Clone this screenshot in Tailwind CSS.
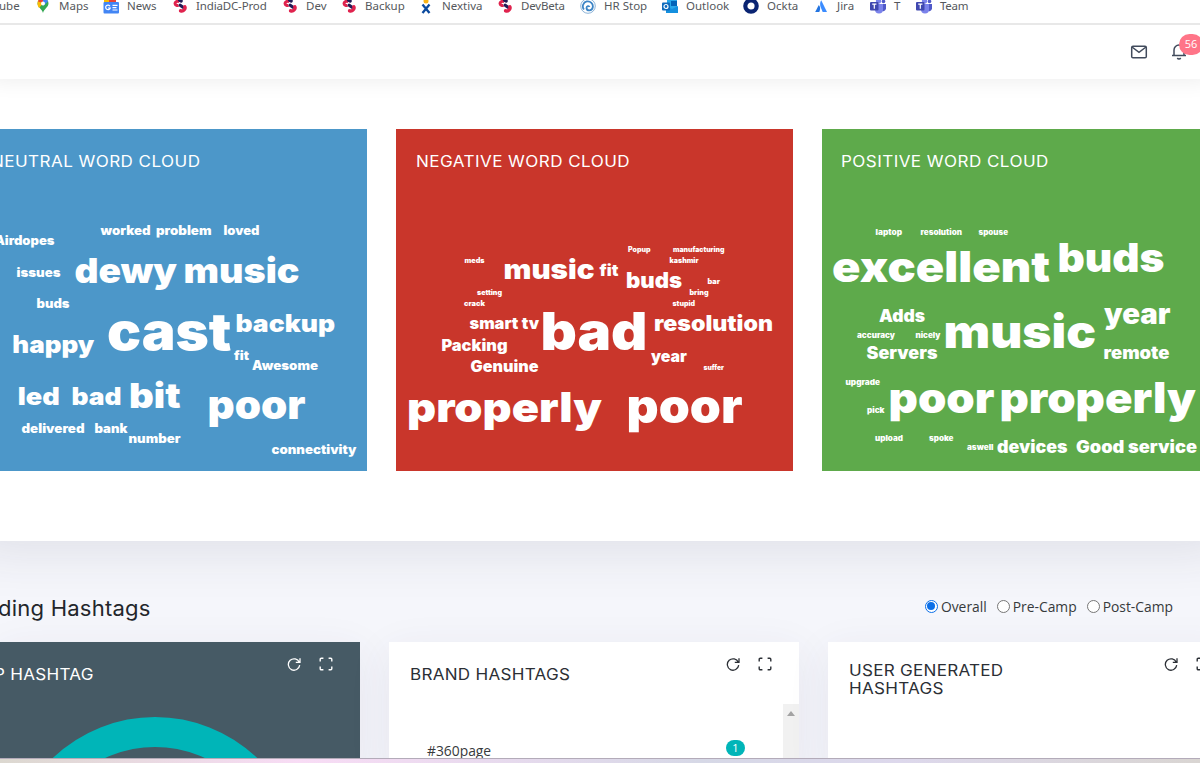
<!DOCTYPE html>
<html lang="en">
<head>
  <meta charset="UTF-8" />
  <meta name="viewport" content="width=device-width, initial-scale=1.0" />
  <title>Word Clouds | Hashtags</title>
  <script src="https://cdn.jsdelivr.net/npm/@tailwindcss/browser@4"></script>
</head>
<body class="h-[763px] w-[1200px] overflow-hidden bg-[#f5f6fb] font-['Open_Sans',sans-serif] text-[#373a3c]">

  <!-- Shared icons -->
  <svg class="hidden">
    <symbol id="swirl" viewBox="0 0 14 14">
      <path d="M6.200 2.600C3.800 1.800 1.800 3 2.100 4.800C2.400 6.400 4.300 6.700 5.500 6.300" fill="none" stroke="#e0234e" stroke-width="3" />
      <path d="M6.600 1.200L8.200 2M7.200 6.200L10 8.200" fill="none" stroke="#241c57" stroke-width="3.200" stroke-linecap="round" />
      <path d="M11.800 7.800C12.800 10 10.500 12.600 7.600 11.800" fill="none" stroke="#e0234e" stroke-width="3.400" stroke-linecap="round" />
    </symbol>
    <symbol id="teams" viewBox="0 0 16 16">
      <circle cx="8.500" cy="3" r="2.600" fill="#7b83eb" />
      <circle cx="13.500" cy="3.500" r="1.800" fill="#5059c9" />
      <path d="M10 6h6v4.500a3 3 0 0 1-5 2z" fill="#5059c9" />
      <path d="M5 6h8v5.500a4 4 0 0 1-8 0z" fill="#7b83eb" />
      <rect x="0" y="4" width="8.500" height="8.500" rx="1" fill="#4048b0" />
      <path d="M2.200 6.200h4.200M4.300 6.200v4.600" stroke="#fff" stroke-width="1.200" />
    </symbol>
    <symbol id="refresh" viewBox="0 0 14 14">
      <path d="M12.300 5.300A5.700 5.700 0 1 0 12.700 8.200M13 1.200v4.200H8.800" fill="none" stroke="currentColor" stroke-width="1.300" />
    </symbol>
    <symbol id="expand" viewBox="0 0 14 14">
      <path d="M1.200 4.400V2.200a1 1 0 0 1 1-1h2.200M9.600 1.200h2.200a1 1 0 0 1 1 1v2.200M12.800 9.600v2.200a1 1 0 0 1-1 1H9.600M4.400 12.800H2.200a1 1 0 0 1-1-1V9.600" fill="none" stroke="currentColor" stroke-width="1.400" />
    </symbol>
  </svg>

  <!-- Bookmarks -->
  <div class="relative z-20 h-[25px] border-b-2 border-[#e8e8e8] bg-white overflow-hidden">
    <div class="-mt-[2px] flex h-4 items-center whitespace-nowrap font-['Noto_Sans','Open_Sans',sans-serif] text-[11.5px] text-[#55585c]">
      <div class="-ml-px w-[36px] shrink-0">ube</div>
      <div class="flex w-[68px] shrink-0 items-center gap-2">
        <svg class="size-4" viewBox="0 0 16 16">
          <path d="M8 15C7 11 2.500 9 2.500 5.500A5.500 5.500 0 0 1 13.500 5.500C13.500 9 9 11 8 15z" fill="#34a853" />
          <path d="M2.500 5.500A5.500 5.500 0 0 1 4.200 1.500L8 5.500L4 10Q2.500 8 2.500 5.500z" fill="#fbbc04" />
          <path d="M3 3.500A5.500 5.500 0 0 1 8 0V5z" fill="#ea4335" />
          <path d="M8 0A5.500 5.500 0 0 1 13 3.400L8 8z" fill="#4285f4" />
          <circle cx="8" cy="5.500" r="2" fill="#fff" />
        </svg>Maps
      </div>
      <div class="flex w-[69px] shrink-0 items-center gap-2">
        <svg class="size-4" viewBox="0 0 16 16">
          <path d="M1 0h12v6H1z" fill="#ea4335" /><path d="M1 2h5v4H1z" fill="#fbbc04" />
          <rect x="0.500" y="4" width="15.500" height="11.500" rx="1" fill="#4285f4" />
          <path d="M7 8.200A2.300 2.300 0 1 0 7.200 10H5M9.500 7.300h5M9.500 9.600h4M9.500 12h5" fill="none" stroke="#fff" stroke-width="1.200" />
        </svg>News
      </div>
      <div class="flex w-[110px] shrink-0 items-center gap-2"><svg class="size-4 p-px"><use href="#swirl" /></svg><span class="tracking-[-0.15px]">IndiaDC-Prod</span></div>
      <div class="flex w-[59px] shrink-0 items-center gap-2"><svg class="size-4 p-px"><use href="#swirl" /></svg>Dev</div>
      <div class="flex w-[77px] shrink-0 items-center gap-2"><svg class="size-4 p-px"><use href="#swirl" /></svg>Backup</div>
      <div class="flex w-[79px] shrink-0 items-center gap-2">
        <svg class="size-4" viewBox="0 0 16 16">
          <circle cx="8" cy="3" r="2.500" fill="#fbb416" />
          <path d="M4.500 6.500L11.500 15M11.500 6.500L4.500 15" stroke="#0b4a9e" stroke-width="2.300" />
        </svg>Nextiva
      </div>
      <div class="flex w-[83px] shrink-0 items-center gap-2"><svg class="size-4 p-px"><use href="#swirl" /></svg><span class="tracking-[-0.2px]">DevBeta</span></div>
      <div class="flex w-[82px] shrink-0 items-center gap-2">
        <svg class="size-4" viewBox="0 0 16 16" fill="none">
          <circle cx="8" cy="8" r="7.300" stroke="#8db4d8" />
          <path d="M4 11.500A5 5 0 1 1 12.700 9.500C12 13 7 13.500 6.500 10C6.500 8 9 7.500 9.500 9" stroke="#3d85c6" stroke-width="1.800" />
        </svg>HR Stop
      </div>
      <div class="flex w-[81px] shrink-0 items-center gap-2">
        <svg class="size-4" viewBox="0 0 16 16">
          <rect x="5" y="0" width="10" height="11" fill="#28a8ea" /><rect x="9" y="3" width="6" height="5" fill="#0364b8" />
          <path d="M4 8l6 3 6-3v7H4z" fill="#1490df" />
          <rect x="0" y="4.500" width="8" height="8" rx="1" fill="#0f6cbd" />
          <circle cx="4" cy="8.500" r="2" fill="none" stroke="#fff" stroke-width="1.200" />
        </svg>Outlook
      </div>
      <div class="flex w-[70px] shrink-0 items-center gap-2">
        <svg class="size-4" viewBox="0 0 16 16"><circle cx="8" cy="8" r="5.700" fill="none" stroke="#0a2472" stroke-width="4.200" /></svg>Ockta
      </div>
      <div class="flex w-[57px] shrink-0 items-center gap-2">
        <svg class="size-4" viewBox="0 0 16 16">
          <path d="M5.800 7C7.500 9 7.500 11 6.300 14H2.200z" fill="#2374e1" />
          <path d="M8.200 2.200L14 14h-4.300L7.800 9.500C6.800 7 6.800 4.500 8.200 2.200z" fill="#3b8cff" />
        </svg>Jira
      </div>
      <div class="flex w-[46px] shrink-0 items-center gap-2"><svg class="size-4"><use href="#teams" /></svg>T</div>
      <div class="flex shrink-0 items-center gap-2"><svg class="size-4"><use href="#teams" /></svg><span class="tracking-[-0.3px]">Team</span></div>
    </div>
  </div>

  <!-- Top navbar -->
  <header class="relative z-10 flex h-[54px] items-center justify-end gap-[22px] bg-white pr-[12px] text-[#414b5c] shadow-[0_-8px_20px_10px_rgba(0,0,0,0.07)]">
    <svg class="size-[18px]" viewBox="0 0 18 18" fill="none" stroke="currentColor" stroke-width="1.500">
      <rect x="1.700" y="3.200" width="14.600" height="11.500" rx="1.300" /><path d="M2 4l7 5.300L16 4" />
    </svg>
    <div class="relative">
      <svg class="size-[18px]" viewBox="0 0 18 18" fill="none" stroke="currentColor" stroke-width="1.500">
        <path d="M2 12.500h14M4 12.500V7a5 5 0 0 1 10 0v5.500M7.300 15a2 2 0 0 0 3.400 0" />
      </svg>
      <span class="absolute -top-[9px] left-[9px] flex h-[21px] w-[24px] items-center justify-center rounded-full bg-[#ff7588] text-[11px] text-white">56</span>
    </div>
  </header>

  <!-- Word clouds -->
  <section class="flex h-[462px] gap-[29px] bg-white pt-[50px] text-white shadow-[0_-20px_50px_30px_rgba(45,50,75,0.11)]">
    <div class="h-[342px] w-[367px] shrink-0 bg-[#4c97c9]">
      <h4 class="-ml-[9px] flex h-[64px] origin-left scale-x-110 items-center whitespace-nowrap pt-px font-['Inter',sans-serif] text-[15.5px] tracking-[0.4px]">NEUTRAL WORD CLOUD</h4>
      <svg class="h-[278px] w-full fill-white font-['Arial_Black','Inter',sans-serif] font-black" viewBox="-0.500 192.900 367 278">
        <g font-size="12.500">
          <text x="-6" y="245.300" textLength="60" lengthAdjust="spacingAndGlyphs">Airdopes</text>
          <text x="100" y="235" textLength="50" lengthAdjust="spacingAndGlyphs">worked</text>
          <text x="155.500" y="235" textLength="55.500" lengthAdjust="spacingAndGlyphs">problem</text>
          <text x="223" y="235" textLength="36" lengthAdjust="spacingAndGlyphs">loved</text>
          <text x="16" y="276.800" textLength="44" lengthAdjust="spacingAndGlyphs">issues</text>
          <text x="36" y="308" textLength="33" lengthAdjust="spacingAndGlyphs">buds</text>
          <text x="233.500" y="360" textLength="15" lengthAdjust="spacingAndGlyphs">fit</text>
          <text x="251.500" y="370" textLength="66" lengthAdjust="spacingAndGlyphs">Awesome</text>
          <text x="21" y="433" textLength="63" lengthAdjust="spacingAndGlyphs">delivered</text>
          <text x="94" y="433" textLength="33" lengthAdjust="spacingAndGlyphs">bank</text>
          <text x="128" y="443.300" textLength="52" lengthAdjust="spacingAndGlyphs">number</text>
          <text x="271" y="453.700" textLength="85" lengthAdjust="spacingAndGlyphs">connectivity</text>
        </g>
        <g font-size="24">
          <text x="235" y="331.700" textLength="99.500" lengthAdjust="spacingAndGlyphs">backup</text>
          <text x="11.800" y="352.700" textLength="82" lengthAdjust="spacingAndGlyphs">happy</text>
          <text x="17.300" y="405" textLength="42" lengthAdjust="spacingAndGlyphs">led</text>
          <text x="71" y="405" textLength="50" lengthAdjust="spacingAndGlyphs">bad</text>
        </g>
        <g font-size="34.500">
          <text x="74" y="282.700" textLength="102.500" lengthAdjust="spacingAndGlyphs">dewy</text>
          <text x="183" y="282.700" textLength="116" lengthAdjust="spacingAndGlyphs">music</text>
          <text x="128.500" y="407.700" textLength="51.500" lengthAdjust="spacingAndGlyphs">bit</text>
        </g>
        <text x="207" y="419" font-size="40" textLength="98" lengthAdjust="spacingAndGlyphs">poor</text>
        <text x="106.500" y="349.500" font-size="52" textLength="124.500" lengthAdjust="spacingAndGlyphs">cast</text>
      </svg>
    </div>

    <div class="h-[342px] w-[397px] shrink-0 bg-[#c9362b]">
      <h4 class="ml-[20px] flex h-[64px] origin-left scale-x-110 items-center whitespace-nowrap pt-px font-['Inter',sans-serif] text-[15.5px] tracking-[0.4px]">NEGATIVE WORD CLOUD</h4>
      <svg class="h-[278px] w-full fill-white font-['Arial_Black','Inter',sans-serif] font-black" viewBox="395.500 192.900 397 278">
        <g font-size="7">
          <text x="627.500" y="252.300" textLength="22.500" lengthAdjust="spacingAndGlyphs">Popup</text>
          <text x="672.500" y="252.300" textLength="51.500" lengthAdjust="spacingAndGlyphs">manufacturing</text>
          <text x="464" y="262.700" textLength="20" lengthAdjust="spacingAndGlyphs">meds</text>
          <text x="669" y="262.700" textLength="29" lengthAdjust="spacingAndGlyphs">kashmir</text>
          <text x="707" y="284" textLength="12.500" lengthAdjust="spacingAndGlyphs">bar</text>
          <text x="689" y="295" textLength="19" lengthAdjust="spacingAndGlyphs">bring</text>
          <text x="476.500" y="295" textLength="25" lengthAdjust="spacingAndGlyphs">setting</text>
          <text x="463.500" y="305.700" textLength="21" lengthAdjust="spacingAndGlyphs">crack</text>
          <text x="672" y="305.700" textLength="22.500" lengthAdjust="spacingAndGlyphs">stupid</text>
          <text x="703" y="370" textLength="20.500" lengthAdjust="spacingAndGlyphs">suffer</text>
        </g>
        <g font-size="15.500">
          <text x="599" y="275.700" textLength="19" lengthAdjust="spacingAndGlyphs">fit</text>
          <text x="469" y="329.300" textLength="69.500" lengthAdjust="spacingAndGlyphs">smart tv</text>
          <text x="441" y="350.700" textLength="66" lengthAdjust="spacingAndGlyphs">Packing</text>
          <text x="470" y="372.300" textLength="68" lengthAdjust="spacingAndGlyphs">Genuine</text>
          <text x="650.500" y="361.700" textLength="36" lengthAdjust="spacingAndGlyphs">year</text>
        </g>
        <g font-size="21">
          <text x="625.500" y="287.700" textLength="56" lengthAdjust="spacingAndGlyphs">buds</text>
          <text x="653.500" y="330.700" textLength="119" lengthAdjust="spacingAndGlyphs">resolution</text>
        </g>
        <text x="503" y="278.700" font-size="26.500" textLength="91" lengthAdjust="spacingAndGlyphs">music</text>
        <text x="540" y="349.700" font-size="52" textLength="107" lengthAdjust="spacingAndGlyphs">bad</text>
        <text x="406.500" y="421.700" font-size="41" textLength="195" lengthAdjust="spacingAndGlyphs">properly</text>
        <text x="626" y="423" font-size="47" textLength="116" lengthAdjust="spacingAndGlyphs">poor</text>
      </svg>
    </div>

    <div class="h-[342px] w-[397px] shrink-0 bg-[#5eaa4b]">
      <h4 class="ml-[19px] flex h-[64px] origin-left scale-x-110 items-center whitespace-nowrap pt-px font-['Inter',sans-serif] text-[15.5px] tracking-[0.4px]">POSITIVE WORD CLOUD</h4>
      <svg class="h-[278px] w-full fill-white font-['Arial_Black','Inter',sans-serif] font-black" viewBox="821.500 192.900 397 278">
        <g font-size="7.500">
          <text x="875" y="235" textLength="26.500" lengthAdjust="spacingAndGlyphs">laptop</text>
          <text x="920" y="235" textLength="41.500" lengthAdjust="spacingAndGlyphs">resolution</text>
          <text x="978" y="235" textLength="29.500" lengthAdjust="spacingAndGlyphs">spouse</text>
          <text x="856.500" y="338" textLength="38" lengthAdjust="spacingAndGlyphs">accuracy</text>
          <text x="915" y="338" textLength="25" lengthAdjust="spacingAndGlyphs">nicely</text>
          <text x="845" y="384.700" textLength="34.500" lengthAdjust="spacingAndGlyphs">upgrade</text>
          <text x="866.500" y="412.700" textLength="17.500" lengthAdjust="spacingAndGlyphs">pick</text>
          <text x="874.500" y="440.700" textLength="28" lengthAdjust="spacingAndGlyphs">upload</text>
          <text x="928.500" y="440.700" textLength="24.500" lengthAdjust="spacingAndGlyphs">spoke</text>
          <text x="966.500" y="450.300" textLength="26.500" lengthAdjust="spacingAndGlyphs">aswell</text>
        </g>
        <g font-size="17">
          <text x="878.500" y="321.700" textLength="46" lengthAdjust="spacingAndGlyphs">Adds</text>
          <text x="866" y="358.700" textLength="71" lengthAdjust="spacingAndGlyphs">Servers</text>
          <text x="1103" y="358.700" textLength="66" lengthAdjust="spacingAndGlyphs">remote</text>
          <text x="996.500" y="453" textLength="70.500" lengthAdjust="spacingAndGlyphs">devices</text>
          <text x="1075.500" y="453" textLength="121" lengthAdjust="spacingAndGlyphs">Good service</text>
        </g>
        <text x="831.500" y="281.700" font-size="42" textLength="218" lengthAdjust="spacingAndGlyphs">excellent</text>
        <text x="1057" y="272" font-size="40" textLength="107" lengthAdjust="spacingAndGlyphs">buds</text>
        <text x="943" y="348.300" font-size="46" textLength="152.500" lengthAdjust="spacingAndGlyphs">music</text>
        <text x="1103.500" y="324" font-size="28" textLength="66.500" lengthAdjust="spacingAndGlyphs">year</text>
        <text x="888" y="412.700" font-size="42" textLength="106" lengthAdjust="spacingAndGlyphs">poor</text>
        <text x="999" y="412.700" font-size="42" textLength="196.500" lengthAdjust="spacingAndGlyphs">properly</text>
      </svg>
    </div>
  </section>

  <!-- Trending hashtags -->
  <section class="h-[217px] overflow-hidden">
    <div class="flex h-[101px] items-center justify-between pt-[32px] pr-[27px]">
      <h2 class="-ml-[2px] origin-left scale-x-105 pt-[3px] font-['Inter',sans-serif] text-[21px] tracking-[0.2px] text-[#23262b]">ding Hashtags</h2>
      <div class="flex items-center gap-[10px] text-[13.85px]">
        <label class="flex items-center gap-[3px]"><span class="-mt-[2px] flex size-[13px] items-center justify-center rounded-full border border-[#0b6fe8] bg-white"><span class="size-[8px] rounded-full bg-[#0b6fe8]"></span></span>Overall</label>
        <label class="flex items-center gap-[3px]"><span class="-mt-[2px] size-[13px] rounded-full border border-[#767676] bg-white"></span>Pre-Camp</label>
        <label class="flex items-center gap-[3px]"><span class="-mt-[2px] size-[13px] rounded-full border border-[#767676] bg-white"></span>Post-Camp</label>
      </div>
    </div>

    <div class="flex gap-[29px] font-['Inter',sans-serif] text-[15.5px] tracking-[0.25px] text-[#2b2f35]">
      <div class="h-[130px] w-[360px] shrink-0 bg-[#465a65] text-white shadow-[0_10px_40px_rgba(62,57,107,0.08)]">
        <div class="flex h-[64px] items-start justify-between pr-[27px]">
          <h4 class="-ml-[6px] origin-left scale-x-110 pt-[21px]">P HASHTAG</h4>
          <div class="flex gap-[18px] pt-[15px]">
            <svg class="size-[14px]"><use href="#refresh" /></svg>
            <svg class="size-[14px]"><use href="#expand" /></svg>
          </div>
        </div>
        <svg class="h-[66px] w-[360px]" viewBox="0 706 360 66">
          <circle cx="155" cy="865" r="133" fill="none" stroke="#00b5b8" stroke-width="30" />
        </svg>
      </div>

      <div class="h-[130px] w-[410px] shrink-0 bg-white shadow-[0_10px_40px_rgba(62,57,107,0.08)]">
        <div class="flex h-[62px] items-start justify-between pr-[27px] pl-[21px]">
          <h4 class="origin-left scale-x-110 pt-[21px]">BRAND HASHTAGS</h4>
          <div class="flex gap-[18px] pt-[15px]">
            <svg class="size-[14px]"><use href="#refresh" /></svg>
            <svg class="size-[14px]"><use href="#expand" /></svg>
          </div>
        </div>
        <div class="flex h-[68px] justify-between font-['Open_Sans',sans-serif] text-[13.85px] tracking-normal text-[#373a3c]">
          <span class="flex-1 pt-[37px] pl-[38px]">#360page</span>
          <span class="mt-[36px] mr-[38px] flex h-[16px] w-[19px] items-center justify-center rounded-full bg-[#00b5b8] text-[11px] text-white">1</span>
          <div class="w-4 bg-[#f1f1f1] pt-[7px]">
            <svg class="mx-auto h-[5px] w-[8px]" viewBox="0 0 8 5"><path d="M4 0l4 5H0z" fill="#a3a3a3" /></svg>
          </div>
        </div>
      </div>

      <div class="h-[130px] w-[410px] shrink-0 bg-white shadow-[0_10px_40px_rgba(62,57,107,0.08)]">
        <div class="flex items-start justify-between pr-[28px] pl-[21px]">
          <h4 class="w-[190px] origin-left scale-x-110 pt-[20px] leading-[18px]">USER GENERATED HASHTAGS</h4>
          <div class="flex gap-[18px] pt-[15px]">
            <svg class="size-[14px]"><use href="#refresh" /></svg>
            <svg class="size-[14px]"><use href="#expand" /></svg>
          </div>
        </div>
      </div>
    </div>
  </section>

  <!-- Desktop edge -->
  <div class="relative flex h-[5px] border-t border-[#b3abb9]">
    <div class="w-[300px] bg-linear-to-r from-[#dcd8d0] to-[#f8dcf5]"></div>
    <div class="w-[400px] bg-linear-to-r from-[#f8dcf5] to-[#d6d8e6]"></div>
    <div class="w-[500px] bg-linear-to-r from-[#d6d8e6] via-[#ddd8ec] via-40% to-[#d9d5d2]"></div>
  </div>
</body>
</html>
